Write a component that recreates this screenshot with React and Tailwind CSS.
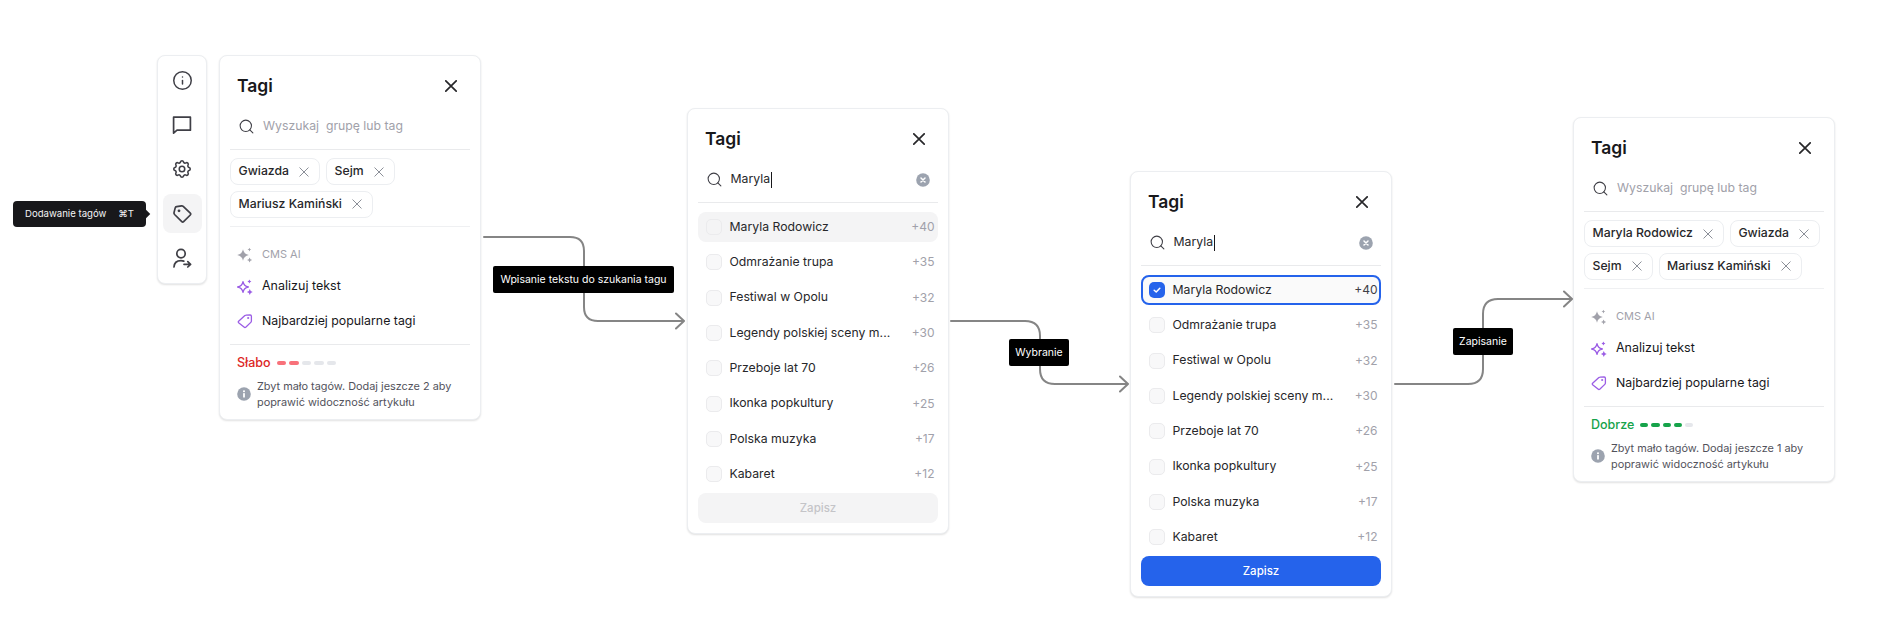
import React from 'react';
import { Search, Info } from 'lucide-react';
import { TbSettings } from 'react-icons/tb';

const CloseIcon = ({ size = 12, className = '', strokeWidth = 1.7 }) => (
  <svg width={size} height={size} viewBox={`0 0 ${size} ${size}`} fill="none" stroke="currentColor" strokeWidth={strokeWidth} strokeLinecap="round" className={className}>
    <path d={`M0.8 0.8L${size - 0.8} ${size - 0.8}M${size - 0.8} 0.8L0.8 ${size - 0.8}`} />
  </svg>
);

const star = (cx, cy, r) =>
  `M${cx} ${cy - r}Q${cx + r * 0.15} ${cy - r * 0.15} ${cx + r} ${cy}Q${cx + r * 0.15} ${cy + r * 0.15} ${cx} ${cy + r}Q${cx - r * 0.15} ${cy + r * 0.15} ${cx - r} ${cy}Q${cx - r * 0.15} ${cy - r * 0.15} ${cx} ${cy - r}Z`;

const SparkleGray = () => (
  <svg width="16" height="16" viewBox="0 0 16 16" fill="#a1a1aa">
    <path d={star(6, 8, 5.8)} />
    <path d={star(12.4, 2.6, 1.9)} />
    <path d={star(12.6, 13, 2.6)} />
  </svg>
);

const SparklePurple = () => (
  <svg width="16" height="16" viewBox="0 0 16 16" fill="#9b5de5">
    <path d={star(6, 8, 5.4)} fill="none" stroke="#9b5de5" strokeWidth="1.3" strokeLinejoin="round" />
    <path d={star(12.4, 2.4, 2)} />
    <path d={star(12.8, 13, 2.9)} />
  </svg>
);

const TagPurple = () => (
  <svg width="16" height="16" viewBox="0 0 16 16" fill="none" stroke="#9b5de5" strokeWidth="1.3" strokeLinejoin="round">
    <path d="M1.6 8.3L7.6 2.7Q8.2 2.2 9 2.2L13.2 2Q14.4 2 14.4 3.2V8Q14.4 8.8 13.8 9.4L9 14Q8 14.9 7 14.1L1.6 9.7Q.9 9 1.6 8.3Z" />
    <circle cx="11.2" cy="5" r="0.4" fill="#9b5de5" />
  </svg>
);

const TagDark = () => (
  <svg width="20" height="20" viewBox="0 0 20 20" fill="none" stroke="#3f3f46" strokeWidth="1.7" strokeLinejoin="round">
    <path d="M2 8.6L3.2 3.9Q3.5 2.9 4.6 2.7L9.6 1.8Q10.5 1.7 11.2 2.4L18.3 9.2Q19.2 10.1 18.3 11L11.6 17.6Q10.7 18.5 9.8 17.6L2.6 10.5Q1.8 9.6 2 8.6Z" />
    <circle cx="7" cy="6.8" r="1.4" fill="#3f3f46" stroke="none" />
  </svg>
);

const ChatIcon = () => (
  <svg width="20" height="20" viewBox="0 0 20 20" fill="none" stroke="#3f3f46" strokeWidth="1.7" strokeLinejoin="round">
    <path d="M1.6 2.2H18.4V15.2H5L1.6 18.2Z" />
  </svg>
);

const UserArrow = () => (
  <svg width="20" height="20" viewBox="0 0 20 20" fill="none" stroke="#3f3f46" strokeWidth="1.7" strokeLinecap="round" strokeLinejoin="round">
    <circle cx="9" cy="5.6" r="4.2" />
    <path d="M2 19C2.2 15 5 12.6 9 12.6C10 12.6 11 12.8 11.8 13.1" />
    <path d="M12 16.3H18.6M15.8 13.6L18.6 16.3L15.8 19" />
  </svg>
);

const InfoDot = () => (
  <svg width="14" height="14" viewBox="0 0 14 14" className="shrink-0">
    <circle cx="7" cy="7" r="6.8" fill="#9ca3af" />
    <rect x="6.1" y="6" width="1.8" height="4.6" rx="0.4" fill="#fff" />
    <circle cx="7" cy="4.2" r="1.05" fill="#fff" />
  </svg>
);

const ClearDot = () => (
  <svg width="14" height="14" viewBox="0 0 14 14" className="shrink-0">
    <circle cx="7" cy="7" r="6.8" fill="#9ca3af" />
    <path d="M5 5L9 9M9 5L5 9" stroke="#fff" strokeWidth="1.5" strokeLinecap="round" />
  </svg>
);

const listItems = [
  ['Maryla Rodowicz', '+40'],
  ['Odmrażanie trupa', '+35'],
  ['Festiwal w Opolu', '+32'],
  ['Legendy polskiej sceny m...', '+30'],
  ['Przeboje lat 70', '+26'],
  ['Ikonka popkultury', '+25'],
  ['Polska muzyka', '+17'],
  ['Kabaret', '+12'],
];

const PanelHeader = () => (
  <div className="mt-[17px] flex h-[26px] items-center justify-between pl-[17px] pr-[23px]">
    <span className="text-[17.5px] font-semibold text-[#18181b]">Tagi</span>
    <CloseIcon size={12} className="text-[#27272a]" />
  </div>
);

const SearchRow = ({ value }) => (
  <div className="mx-[10px] mt-[5px] flex h-[46px] items-center border-b border-[#e9eaec] pl-[8px] pr-[8px]">
    <Search size={17} strokeWidth={1.5} className="shrink-0 text-[#3f3f46]" />
    {value ? (
      <>
        <span className="ml-[7.5px] text-[12.25px] text-[#27272a]">{value}</span>
        <span className="ml-[1px] h-[16px] w-px bg-[#18181b]" />
        <span className="ml-auto"><ClearDot /></span>
      </>
    ) : (
      <span className="ml-[8px] whitespace-pre text-[12.25px] text-[#a1a1aa]">Wyszukaj  grupę lub tag</span>
    )}
  </div>
);

const Chip = ({ label }) => (
  <span className="flex h-[27px] items-center gap-[10px] rounded-lg border border-[#eceef1] pl-[7.5px] pr-[10px] text-[12.25px] font-medium text-[#27272a]">
    {label}
    <CloseIcon size={10} strokeWidth={1} className="text-[#8b8f98]" />
  </span>
);

const SummaryPanel = ({ className, chips, score, scoreClass, bars, missing }) => (
  <div className={`absolute flex w-[262px] flex-col rounded-lg border border-[#eceef1] bg-white shadow-[0_1px_2px_rgba(0,0,0,0.12)] ${className}`}>
    <PanelHeader />
    <SearchRow />
    <div className="mx-[10px] flex flex-wrap gap-x-[6px] gap-y-[5.5px] border-b border-[#eff0f2] py-[8px]">
      {chips.map(c => <Chip key={c} label={c} />)}
    </div>
    <div className="mx-[10px] border-b border-[#e9eaec] pb-[14px] pl-[7px]">
      <div className="mt-[19px] flex h-[18px] items-center gap-[9px] text-[11px] text-[#a1a1aa]">
        <SparkleGray /> CMS AI
      </div>
      <div className="mt-[14px] flex h-[18px] items-center gap-[9px] text-[12.5px] text-[#18181b]">
        <SparklePurple /> Analizuj tekst
      </div>
      <div className="mt-[16.5px] flex h-[18px] items-center gap-[9px] text-[12.35px] text-[#18181b]">
        <TagPurple /> Najbardziej popularne tagi
      </div>
    </div>
    <div className="pb-[9px] pl-[17px] pr-[10px]">
      <div className="mt-[9px] flex h-[18px] items-center">
        <span className={`text-[12.5px] font-medium ${scoreClass}`}>{score}</span>
        <div className="ml-[6px] flex gap-[3px]">{bars}</div>
      </div>
      <div className="mt-[6px] flex items-center gap-[6px]">
        <InfoDot />
        <p className="text-[10.9px] leading-[16px] text-[#52525b]">
          Zbyt mało tagów. Dodaj jeszcze {missing} aby<br />poprawić widoczność artykułu
        </p>
      </div>
    </div>
  </div>
);

const ListPanel = ({ className, selected }) => (
  <div className={`absolute flex w-[262px] flex-col rounded-lg border border-[#eceef1] bg-white shadow-[0_1px_2px_rgba(0,0,0,0.12)] ${className}`}>
    <PanelHeader />
    <SearchRow value="Maryla" />
    <div className="mx-[10px] mt-[9px] flex flex-col gap-[5.33px]">
      {listItems.map(([name, count], i) => {
        const first = i === 0;
        return (
          <div
            key={name}
            className={`flex h-[30px] items-center rounded-lg pl-[7.5px] pr-[3.5px] text-[12.25px] text-[#27272a] ${first && selected ? 'border-2 border-[#2563eb] bg-[#fafafa] !pl-[5.5px] !pr-[1.5px]' : ''} ${first && !selected ? 'bg-[#f4f4f5]' : ''}`}
          >
            {first && selected ? (
              <span className="flex h-[16px] w-[16px] shrink-0 items-center justify-center rounded-[5px] bg-[#2563eb]">
                <svg width="10" height="10" viewBox="0 0 10 10" fill="none" stroke="#fff" strokeWidth="1.5" strokeLinecap="round" strokeLinejoin="round">
                  <path d="M2.2 5.2L4.2 7L7.8 3.2" />
                </svg>
              </span>
            ) : (
              <span className={`h-[16px] w-[16px] shrink-0 rounded-[5px] border border-[#ebebed] ${first ? 'bg-[#f4f4f5]' : 'bg-[#f8f8f9]'}`} />
            )}
            <span className="ml-[8px]">{name}</span>
            <span className={`ml-auto text-[12px] ${first && selected ? 'text-[#3f3f46]' : 'text-[#a1a1aa]'}`}>{count}</span>
          </div>
        );
      })}
    </div>
    <button className={`mx-[10px] mb-[10px] mt-[4px] h-[30px] rounded-lg text-[11.5px] font-medium ${selected ? 'bg-[#2563eb] text-white' : 'bg-[#f4f4f5] text-[#c4c4c8]'}`}>
      Zapisz
    </button>
  </div>
);

const FlowLabel = ({ className, children }) => (
  <div className={`absolute flex h-[27px] items-center justify-center whitespace-nowrap rounded-[2px] bg-black text-[10.5px] text-white ${className}`}>
    {children}
  </div>
);

const redBars = [0, 1, 2, 3, 4].map(i => (
  <span key={i} className={`h-[4px] w-[9.5px] rounded-full ${i < 2 ? 'bg-[#f8717a]' : 'bg-[#e5e7eb]'}`} />
));

const greenBars = [0, 1, 2, 3, 4].map(i => (
  <span key={i} className={`h-[4px] w-[8.2px] rounded-full ${i < 4 ? 'bg-[#16a34a]' : 'bg-[#e5e7eb]'}`} />
));

const App = () => {
  return (
    <div className="relative h-[640px] w-[1897px] overflow-hidden bg-white font-['Inter',sans-serif]">
      {/* connectors */}
      <svg width="1897" height="640" className="absolute left-0 top-0" fill="none" stroke="#858585" strokeWidth="2" strokeLinecap="round" strokeLinejoin="round">
        <path d="M484 237H570Q584 237 584 251V307Q584 321 598 321H683M676 313.5L684 321L676 328.5" />
        <path d="M951 321H1025Q1040 321 1040 336V369Q1040 384 1055 384H1127M1120 376.5L1128 384L1120 391.5" />
        <path d="M1395 384H1468Q1483 384 1483 369V314Q1483 299 1498 299H1571M1564 291.5L1572 299L1564 306.5" />
      </svg>

      {/* tooltip */}
      <div className="absolute left-[13px] top-[201px] flex h-[26px] w-[133px] items-center justify-between rounded-[4px] bg-[#18181b] pl-[12px] pr-[12px] text-[9.6px] text-[#f4f4f5]">
        <span>Dodawanie tagów</span>
        <span>⌘T</span>
        <span className="absolute -right-[3px] top-[10px] h-[6px] w-[6px] rotate-45 bg-[#18181b]" />
      </div>

      {/* side toolbar */}
      <div className="absolute left-[157px] top-[55px] flex h-[229px] w-[50px] flex-col items-center gap-[5.5px] rounded-lg border border-[#eceef1] bg-white py-[5.5px] shadow-[0_1px_2px_rgba(0,0,0,0.12)]">
        <div className="flex h-[39px] w-[39px] items-center justify-center"><Info size={21} strokeWidth={1.7} className="text-[#3f3f46]" /></div>
        <div className="flex h-[39px] w-[39px] items-center justify-center"><ChatIcon /></div>
        <div className="flex h-[39px] w-[39px] items-center justify-center"><TbSettings size={22} strokeWidth={1.7} className="text-[#3f3f46]" /></div>
        <div className="flex h-[39px] w-[39px] items-center justify-center rounded-lg bg-[#f4f4f5]"><TagDark /></div>
        <div className="flex h-[39px] w-[39px] items-center justify-center"><UserArrow /></div>
      </div>

      <SummaryPanel
        className="left-[219px] top-[55px]"
        chips={['Gwiazda', 'Sejm', 'Mariusz Kamiński']}
        score="Słabo"
        scoreClass="text-[#dc2626]"
        bars={redBars}
        missing={2}
      />
      <ListPanel className="left-[687px] top-[108px]" />
      <ListPanel className="left-[1130px] top-[171px]" selected />
      <SummaryPanel
        className="left-[1573px] top-[117px]"
        chips={['Maryla Rodowicz', 'Gwiazda', 'Sejm', 'Mariusz Kamiński']}
        score="Dobrze"
        scoreClass="text-[#16a34a]"
        bars={greenBars}
        missing={1}
      />

      <FlowLabel className="left-[493px] top-[266px] w-[181px]">Wpisanie tekstu do szukania tagu</FlowLabel>
      <FlowLabel className="left-[1009px] top-[339px] w-[60px]">Wybranie</FlowLabel>
      <FlowLabel className="left-[1453px] top-[328px] w-[60px]">Zapisanie</FlowLabel>
    </div>
  );
};

export default App;
